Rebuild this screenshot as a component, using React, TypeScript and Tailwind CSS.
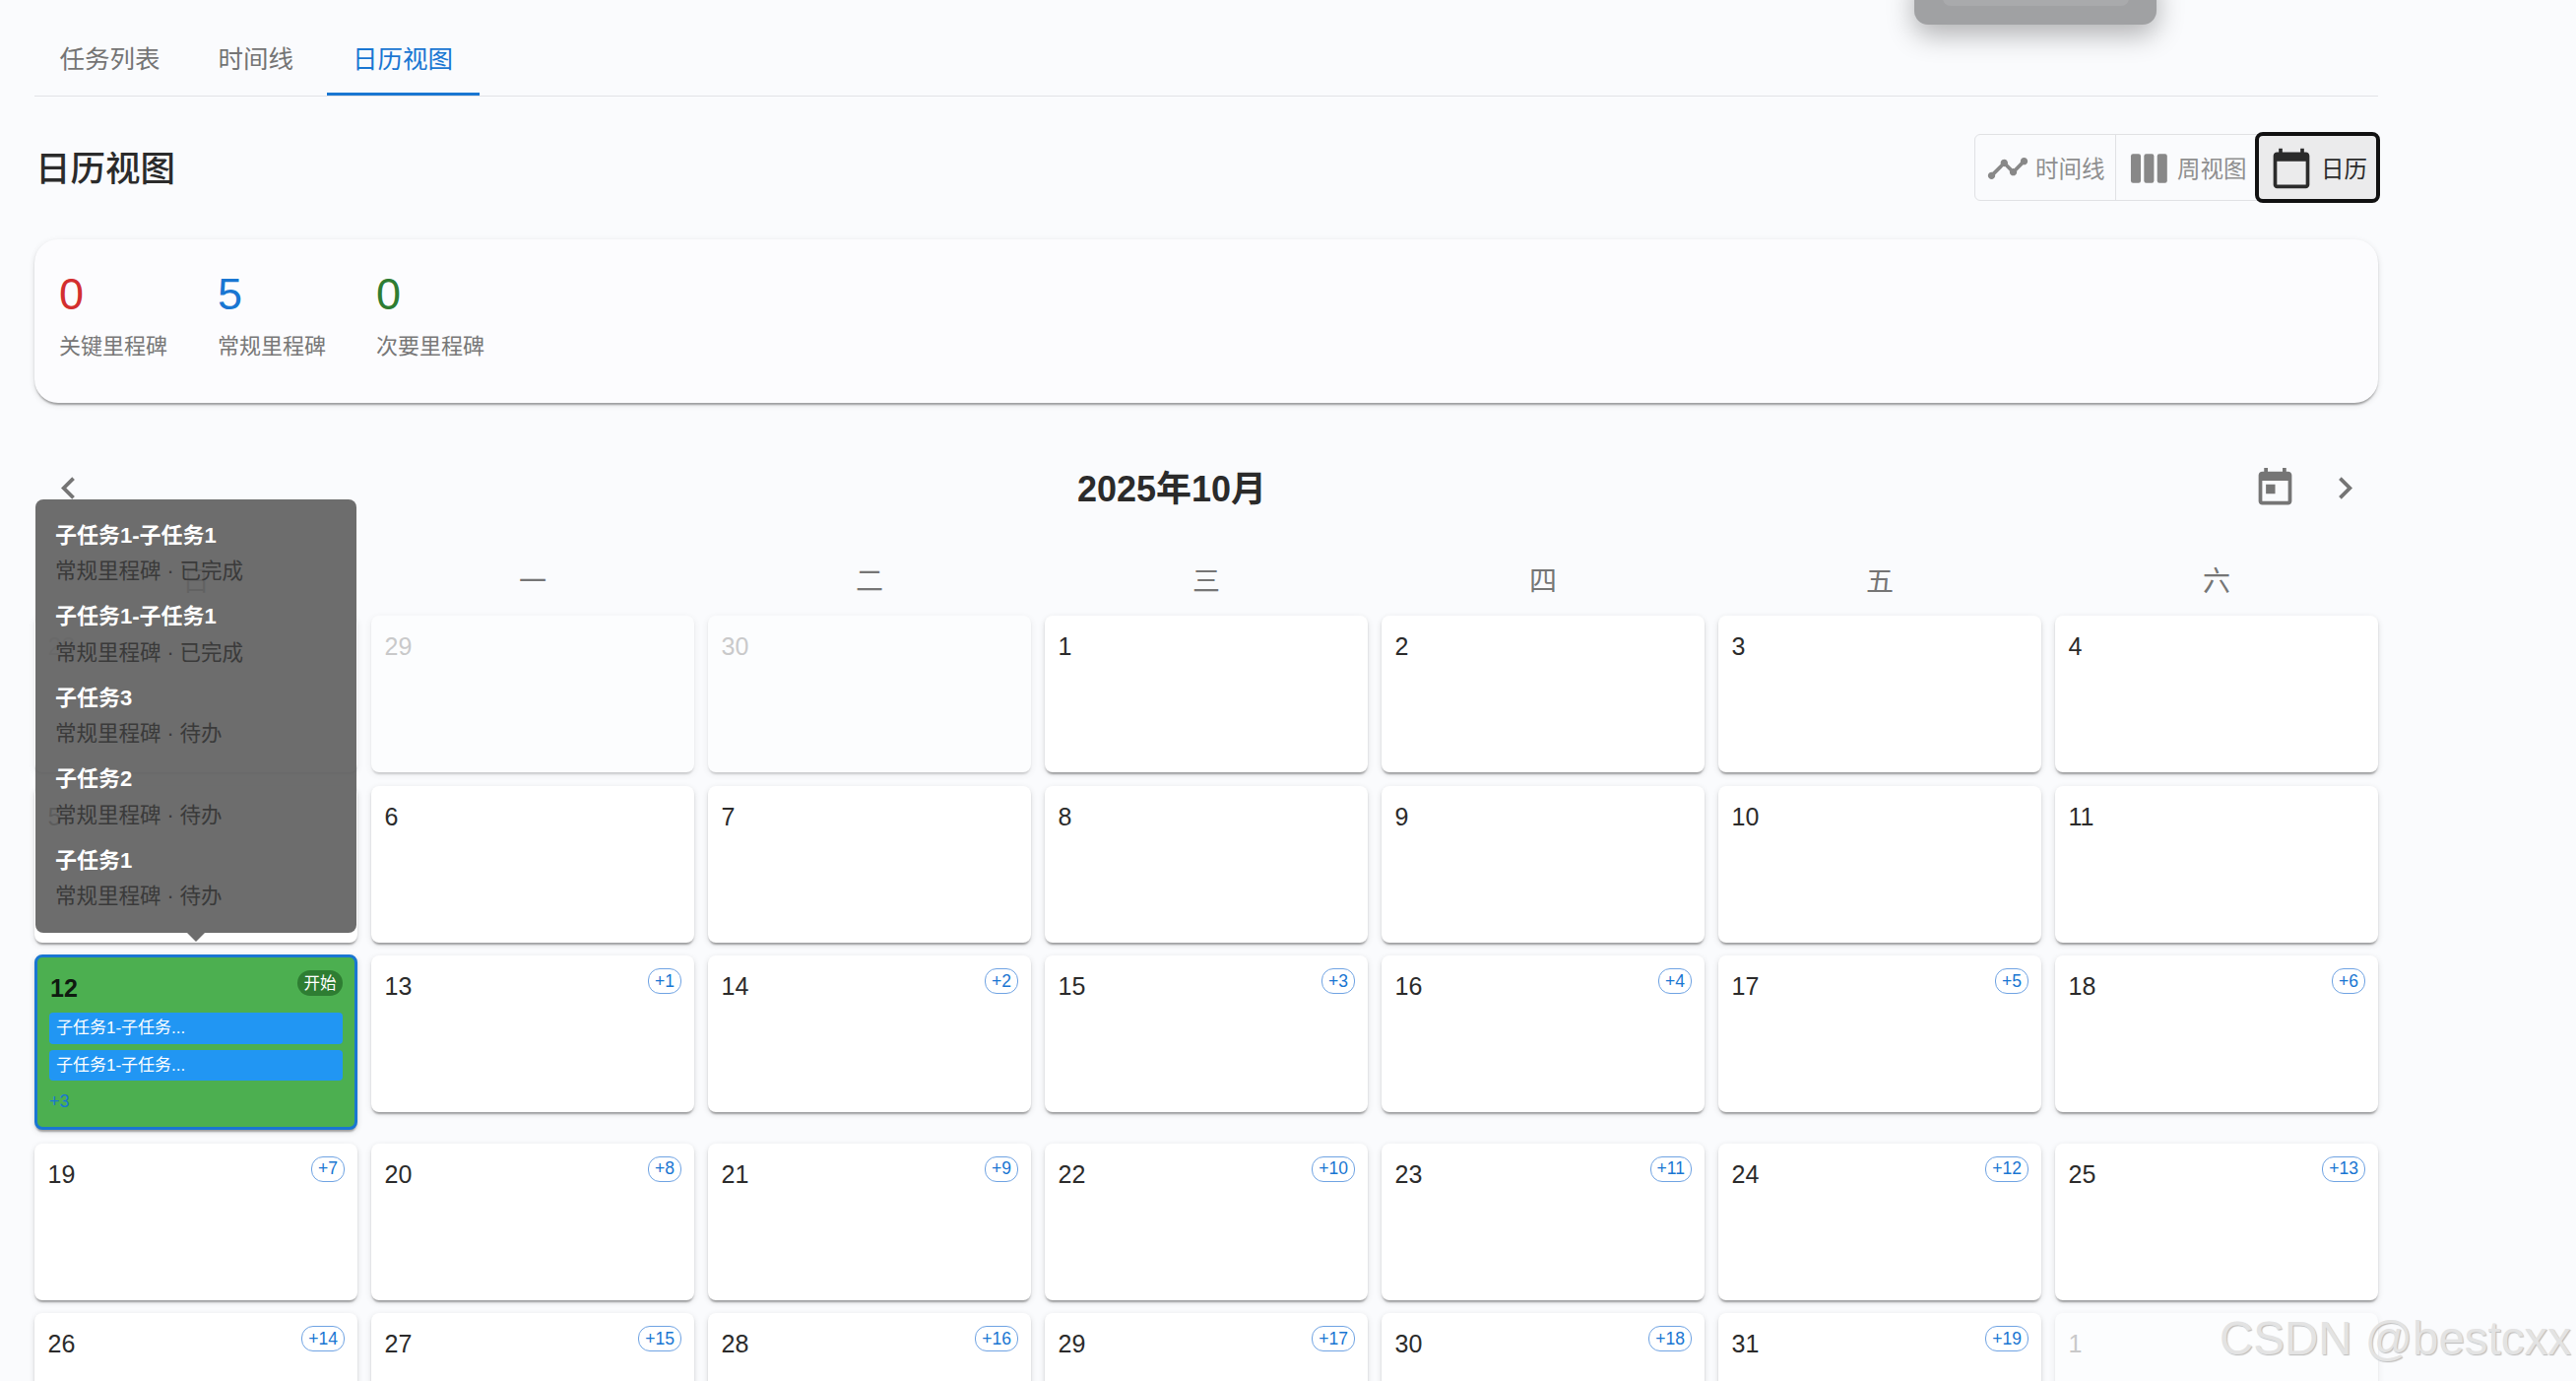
import type { ReactNode } from "react";

const weekdays = ["日", "一", "二", "三", "四", "五", "六"];

const stats = [
  { value: 0, label: "关键里程碑", color: "text-[#d32f2f]" },
  { value: 5, label: "常规里程碑", color: "text-[#1976d2]" },
  { value: 0, label: "次要里程碑", color: "text-[#2e7d32]" },
];

const tips = [
  { title: "子任务1-子任务1", sub: "常规里程碑 · 已完成" },
  { title: "子任务1-子任务1", sub: "常规里程碑 · 已完成" },
  { title: "子任务3", sub: "常规里程碑 · 待办" },
  { title: "子任务2", sub: "常规里程碑 · 待办" },
  { title: "子任务1", sub: "常规里程碑 · 待办" },
];

// prev/next month days are faded, 12 is the highlighted one
const days = [
  { day: 28, faded: true },
  { day: 29, faded: true },
  { day: 30, faded: true },
  ...Array.from({ length: 31 }, (_, i) => ({ day: i + 1, faded: false })),
  { day: 1, faded: true },
];

const cellShadow = "shadow-[0_4px_2px_-2px_rgba(0,0,0,0.2),0_2px_2px_0_rgba(0,0,0,0.14),0_2px_6px_0_rgba(0,0,0,0.12)]";

function Icon({ d, className }: { d: string; className: string }) {
  return (
    <svg viewBox="0 0 24 24" fill="currentColor" className={className}>
      <path d={d} />
    </svg>
  );
}

const timelinePath =
  "M23 8c0 1.1-.9 2-2 2-.18 0-.35-.02-.51-.07l-3.56 3.55c.05.16.07.34.07.52 0 1.1-.9 2-2 2s-2-.9-2-2c0-.18.02-.36.07-.52l-2.55-2.55c-.16.05-.34.07-.52.07s-.36-.02-.52-.07l-4.55 4.56c.05.16.07.33.07.51 0 1.1-.9 2-2 2s-2-.9-2-2 .9-2 2-2c.18 0 .35.02.51.07l4.56-4.55C8.02 9.36 8 9.18 8 9c0-1.1.9-2 2-2s2 .9 2 2c0 .18-.02.36-.07.52l2.55 2.55c.16-.05.34-.07.52-.07s.36.02.52.07l3.55-3.56C19.02 8.35 19 8.18 19 8c0-1.1.9-2 2-2s2 .9 2 2z";
const calendarPath =
  "M20 3h-1V1h-2v2H7V1H5v2H4c-1.1 0-2 .9-2 2v16c0 1.1.9 2 2 2h16c1.1 0 2-.9 2-2V5c0-1.1-.9-2-2-2zm0 18H4V8h16v13z";
const todayPath =
  "M19 3h-1V1h-2v2H8V1H6v2H5c-1.11 0-1.99.9-1.99 2L3 19c0 1.1.89 2 2 2h14c1.1 0 2-.9 2-2V5c0-1.1-.9-2-2-2zm0 16H5V8h14v11zM7 10h5v5H7z";
const leftPath = "M15.41 7.41 14 6l-6 6 6 6 1.41-1.41L10.83 12z";
const rightPath = "M10 6 8.59 7.41 13.17 12l-4.58 4.59L10 18l6-6z";

function WeekIcon() {
  return (
    <svg viewBox="0 0 24 24" fill="#888" className="h-11 w-11">
      <rect x="2.7" y="4" width="5.5" height="16" rx="1.2" />
      <rect x="10" y="4" width="5.5" height="16" rx="1.2" />
      <rect x="17.3" y="4" width="5.5" height="16" rx="1.2" />
    </svg>
  );
}

function Tab({ children, active }: { children: ReactNode; active?: boolean }) {
  return (
    <div
      className={
        active
          ? "h-[76px] px-[26.5px] flex items-center text-[25.5px] text-[#1976d2] border-b-[3px] border-[#1976d2] pt-[5px]"
          : "h-[76px] px-[25.5px] flex items-center text-[25.5px] text-[#747474] pt-[2px]"
      }
    >
      {children}
    </div>
  );
}

function HighlightCell() {
  return (
    <div className={`relative -mt-px h-[178px] rounded-lg border-[3px] border-[#1976d2] bg-[#4caf50] px-3 pt-[13px] ${cellShadow}`}>
      <div className="absolute left-[-2px] bottom-full mb-[25px] z-10 w-[326px] rounded-lg bg-[rgba(97,97,97,0.92)] px-5 py-[22px]">
        <div className="flex flex-col gap-4">
          {tips.map((t, i) => (
            <div key={i} className="flex flex-col gap-[6.5px]">
              <div className="text-[22px] leading-[30px] font-semibold text-white whitespace-nowrap">{t.title}</div>
              <div className="text-[21.5px] leading-[30px] text-[#3a3a3a] whitespace-nowrap">{t.sub}</div>
            </div>
          ))}
        </div>
        <div className="absolute left-1/2 top-full -ml-[9px] h-0 w-0 border-x-[9px] border-t-[9px] border-x-transparent border-t-[rgba(97,97,97,0.92)]" />
      </div>
      <div className="flex h-[43px] items-start justify-between">
        <span className="mt-[3px] pl-px text-[25px] leading-[30px] font-bold text-[#0f1a10]">12</span>
        <span className="flex h-[26px] w-[46px] items-center justify-center rounded-[13px] bg-[#2e7d32] text-[16.5px] text-white">开始</span>
      </div>
      <div className="flex flex-col gap-[6px]">
        <div className="flex h-[32px] items-center rounded bg-[#2196f3] pl-[7px] text-[17px] text-white">子任务1-子任务...</div>
        <div className="flex h-[31px] items-center rounded bg-[#2196f3] pl-[7px] text-[17px] text-white">子任务1-子任务...</div>
      </div>
      <div className="mt-[9px] text-[18px] leading-6 text-[#1976d2]">+3</div>
    </div>
  );
}

function DayCell({ day, faded, extra }: { day: number; faded: boolean; extra: number }) {
  return (
    <div className={`flex h-[159px] items-start justify-between rounded-lg bg-white pl-[13.5px] pr-[13px] ${cellShadow} ${faded ? "opacity-50" : ""}`}>
      <span className={`pt-4 text-[25px] leading-[30px] ${faded ? "text-[#999]" : "text-[#2b2b2b]"}`}>{day}</span>
      {extra > 0 && (
        <span className="mt-[13px] flex h-[26px] min-w-[34px] items-center justify-center rounded-[12px] border-[1.5px] border-[#6fa3e3] px-[6px] text-[17.5px] text-[#1976d2]">
          +{extra}
        </span>
      )}
    </div>
  );
}

export default function App() {
  return (
    <div className="relative h-[1402px] overflow-hidden bg-[#fafbfd] font-['Liberation_Sans','Noto_Sans_CJK_SC',sans-serif]">
      {/* dialog peeking in from the top edge */}
      <div className="absolute left-[1944px] top-[-30px] h-[55px] w-[246px] rounded-[14px] bg-[#a0a1a3] shadow-[0_10px_28px_rgba(0,0,0,0.3)]">
        <div className="mx-auto h-[36px] w-[189px] rounded-lg bg-[#a9aaac]" />
      </div>

      <div className="ml-[35px] w-[2380px] pt-[21px]">
        <div className="flex gap-2 border-b border-[#e2e3e6]">
          <Tab>任务列表</Tab>
          <Tab>时间线</Tab>
          <Tab active>日历视图</Tab>
        </div>

        <div className="mt-[38px] flex h-[68px] items-center justify-between">
          <h1 className="pt-[6px] pl-px text-[35.5px] font-medium text-[#2b2b2b]">日历视图</h1>
          <div className="-mr-px flex h-[68px] rounded-md border border-[#e0e1e4] pt-[2px] text-[23.5px] text-[#8f8f8f]">
            <div className="-mt-[2px] flex w-[143px] items-center gap-[6px] border-r border-[#e0e1e4] pl-[11px] pt-[2px]">
              <Icon d={timelinePath} className="h-11 w-11 text-[#888]" />
              <span className="pt-[3px]">时间线</span>
            </div>
            <div className="flex w-[143px] items-center gap-2 pl-[10px]">
              <WeekIcon />
              <span className="pt-[3px]">周视图</span>
            </div>
            <div className="z-[1] -mb-px -mt-[3px] flex w-[123px] items-center gap-2 rounded-md bg-[#ebebec] pl-[13px] pt-[2px] text-[#2b2b2b] outline-[4px] outline-offset-[-2px] outline-[#111]">
              <Icon d={calendarPath} className="h-11 w-11 text-[#2b2b2b]" />
              <span className="pt-[3px]">日历</span>
            </div>
          </div>
        </div>

        <div className={`mt-[39px] flex h-[166px] gap-[53px] rounded-3xl bg-[#fcfcfe] pl-[25px] pt-[29px] ${cellShadow}`}>
          {stats.map((s) => (
            <div key={s.label} className="w-[108px]">
              <div className={`text-[45px] leading-[54px] ${s.color}`}>{s.value}</div>
              <div className="mt-[11px] text-[22px] leading-[30px] text-[#777] whitespace-nowrap">{s.label}</div>
            </div>
          ))}
        </div>

        <div className="mt-[56px] flex h-[60px] items-center justify-between">
          <div className="w-[68px] pl-3 text-[#757575]">
            <Icon d={leftPath} className="h-[45px] w-[45px]" />
          </div>
          <h2 className="pt-[3px] text-[36px] font-bold text-[#2b2b2b]">2025年10月</h2>
          <div className="flex w-[138px] items-center gap-[26px] pl-[11px] text-[#757575]">
            <Icon d={todayPath} className="h-[45px] w-[45px]" />
            <Icon d={rightPath} className="h-[45px] w-[45px]" />
          </div>
        </div>

        <div className="mt-[46px] mb-[14px] grid grid-cols-7 gap-x-[14px]">
          {weekdays.map((w) => (
            <div key={w} className="text-center text-[28px] leading-10 text-[#757575]">
              {w}
            </div>
          ))}
        </div>

        <div className="grid grid-cols-7 items-start gap-x-[14px] gap-y-[13.5px]">
          {days.map((d, i) =>
            d.day === 12 && !d.faded ? (
              <HighlightCell key={i} />
            ) : (
              <DayCell key={i} day={d.day} faded={d.faded} extra={!d.faded && d.day > 12 ? d.day - 12 : 0} />
            )
          )}
        </div>
      </div>

      <div className="absolute left-[2254px] top-[1335px] text-[47.5px] leading-[48px] text-[#e3e3e3] whitespace-nowrap [text-shadow:1px_1px_1px_#bbb]">
        CSDN @bestcxx
      </div>
    </div>
  );
}
